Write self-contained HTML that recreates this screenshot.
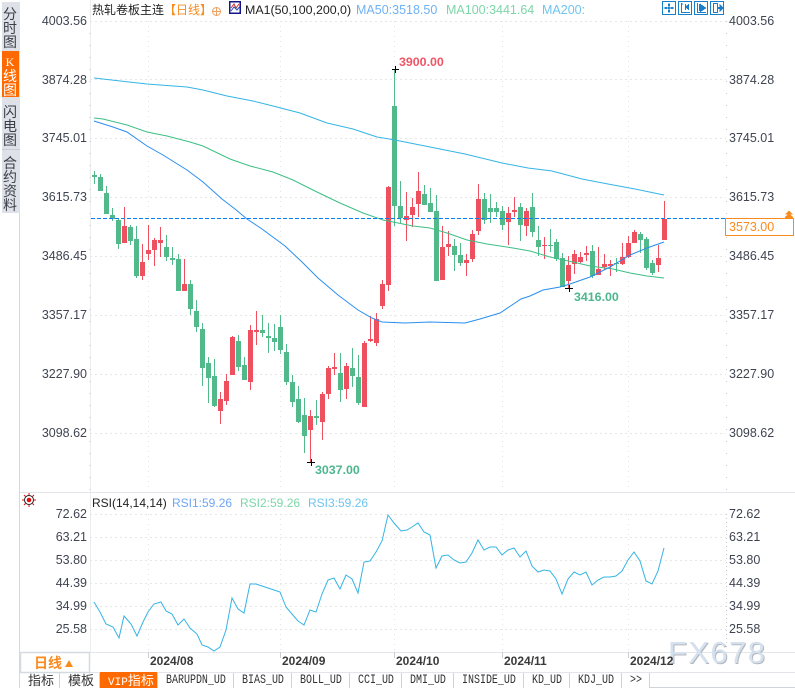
<!DOCTYPE html>
<html><head><meta charset="utf-8"><style>
html,body{margin:0;padding:0;background:#fff;width:795px;height:688px;overflow:hidden}
svg{display:block}
text{font-family:"Liberation Sans","Noto Sans CJK SC",sans-serif}
.p{font-size:12.5px;fill:#3f4450}
.cj{font-size:14px;fill:#3c4046;font-family:"Liberation Sans","WenQuanYi Zen Hei","Noto Sans CJK SC",sans-serif}
.t{font-family:"Liberation Mono","Noto Sans CJK SC",monospace;font-size:10px;fill:#333;transform-box:fill-box;transform-origin:50% 100%;transform:scaleY(1.25)}
.tc{font-size:13px;fill:#333;font-family:"Liberation Sans","WenQuanYi Zen Hei",sans-serif}
.d{font-size:12px;font-weight:bold;fill:#3a3a3a}
</style></head><body>
<svg width="795" height="688" viewBox="0 0 795 688" xmlns="http://www.w3.org/2000/svg">
<!-- side tabs -->
<rect x="2" y="2" width="18" height="211" fill="#dfe1e8"/>
<rect x="2" y="51" width="17" height="46" fill="#ff6a00"/>
<path d="M2 149.5H20" stroke="#c9ccd4"/>
<path d="M19.5 213V688" stroke="#d5d8de"/>
<g class="cj" text-anchor="middle">
<text class="cj" x="10" y="19">分</text><text class="cj" x="10" y="33">时</text><text class="cj" x="10" y="47">图</text>
<text x="10" y="66" style="font-family:'Liberation Serif',serif;font-size:12px;fill:#fff">K</text><text class="cj" x="10" y="81" style="fill:#fff">线</text><text class="cj" x="10" y="95" style="fill:#fff">图</text>
<text class="cj" x="10" y="117">闪</text><text class="cj" x="10" y="131">电</text><text class="cj" x="10" y="145">图</text>
<text class="cj" x="10" y="168">合</text><text class="cj" x="10" y="182">约</text><text class="cj" x="10" y="196">资</text><text class="cj" x="10" y="210">料</text>
</g>
<!-- axes -->
<path d="M90.5 0V652" stroke="#ececec"/>
<path d="M90 33V490M726.5 21V490" stroke="#c8c8c8" stroke-dasharray="1 11"/>
<path d="M726.5 514V650" stroke="#c8c8c8" stroke-dasharray="1 3"/>
<path d="M90 21.5H726M90 79.5H726M90 138.5H726M90 197.5H726M90 256.5H726M90 315.5H726M90 374.5H726M90 433.5H726" stroke="#e6e6e6" stroke-dasharray="2 3"/>
<path d="M90 514.5H726M90 537.5H726M90 560.5H726M90 583.5H726M90 606.5H726M90 629.5H726" stroke="#e6e6e6" stroke-dasharray="2 3"/>
<path d="M148.5 21V490M280.5 21V490M394.5 21V490M502.5 21V490M628.5 21V490M148.5 514V650M280.5 514V650M394.5 514V650M502.5 514V650M628.5 514V650" stroke="#e4e4e4" stroke-dasharray="1 4"/>
<path d="M20 492.5H795M90 652.5H795M20 672.5H795" stroke="#e3e5ea"/>
<path d="M148.5 652V658M280.5 652V658M394.5 652V658M502.5 652V658M628.5 652V658" stroke="#ccc"/>
<!-- candles green -->
<g shape-rendering="crispEdges" fill="none" stroke="#52b98a">
<path stroke-width="1" d="M94.5 171V184M100.5 174V191M106.5 186V214M112.5 208V221M118.5 219V249M130.5 225V245M136.5 226V278M166.5 235V261M172.5 247V265M178.5 254V291M190.5 280V315M196.5 300V332M202.5 323V386M208.5 357V403M214.5 359V407M238.5 335V371M244.5 357V380M262.5 315V337M268.5 323V353M274.5 324V351M280.5 315V354M286.5 344V385M292.5 375V407M298.5 386V423M304.5 398V453M316.5 400V425M340.5 353V402M352.5 348V387M358.5 355V405M394.5 69V226M400.5 181V223M424.5 185V205M430.5 188V212M436.5 195V281M454.5 239V271M460.5 243V266M484.5 193V224M490.5 194V223M496.5 202V217M502.5 206V230M520.5 203V241M532.5 193V237M538.5 226V256M550.5 229V252M556.5 239V261M562.5 253V287M592.5 245V278M616.5 258V272M640.5 232V253M646.5 237V270M652.5 260V275"/>
<path stroke-width="5" d="M94.5 175V177M100.5 177V191M106.5 193V214M112.5 215V219M118.5 220V244M130.5 227V241M136.5 239V276M166.5 247V257M172.5 258V260M178.5 259V291M190.5 284V309M196.5 311V327M202.5 329V368M208.5 363V378M214.5 376V406M238.5 341V367M244.5 365V380M262.5 330V333M268.5 336V338M274.5 338V342M280.5 327V350M286.5 352V382M292.5 382V402M298.5 399V422M304.5 415V436M316.5 416V418M340.5 373V390M352.5 368V376M358.5 377V403M394.5 106V206M400.5 206V218M424.5 194V205M430.5 203V212M436.5 211V281M454.5 246V255M460.5 255V263M484.5 199V220M490.5 208V212M496.5 208V212M502.5 211V225M520.5 207V225M532.5 207V232M538.5 240V247M550.5 245V246M556.5 242V259M562.5 258V287M592.5 251V276M616.5 263V264M640.5 234V240M646.5 239V268M652.5 263V273"/>
</g>
<!-- candles red -->
<g shape-rendering="crispEdges" fill="none" stroke="#ee5060">
<path stroke-width="1" d="M124.5 207V243M142.5 244V280M148.5 225V260M154.5 238V266M160.5 227V257M184.5 259V291M220.5 392V424M226.5 374V405M232.5 336V375M250.5 325V390M256.5 311V345M310.5 410V462M322.5 392V440M328.5 366V399M334.5 353V375M346.5 363V399M364.5 341V407M370.5 316V342M376.5 313V346M382.5 280V309M388.5 186V291M406.5 192V241M412.5 198V227M418.5 172V217M442.5 226V280M448.5 231V256M466.5 254V276M472.5 230V262M478.5 184V235M508.5 207V245M514.5 197V217M526.5 208V236M544.5 237V259M568.5 256V288M574.5 250V274M580.5 252V263M586.5 246V261M598.5 247V275M604.5 254V270M610.5 260V276M622.5 243V265M628.5 236V258M634.5 230V243M658.5 245V272M664.5 201V240"/>
<path stroke-width="5" d="M124.5 226V243M142.5 262V276M148.5 250V254M154.5 240V250M160.5 240V243M184.5 284V291M220.5 399V411M226.5 381V401M232.5 337V375M250.5 330V382M256.5 330V332M310.5 416V430M322.5 394V422M328.5 368V394M334.5 367V369M346.5 366V389M364.5 343V407M370.5 339V341M376.5 319V343M382.5 284V306M388.5 187V285M406.5 216V220M412.5 207V215M418.5 191V204M442.5 247V280M448.5 244V247M466.5 260V263M472.5 234V259M478.5 199V231M508.5 213V222M514.5 210V212M526.5 211V226M544.5 245V246M568.5 265V281M574.5 254V264M580.5 257V262M586.5 253V255M598.5 269V275M604.5 264V267M610.5 264V266M622.5 257V264M628.5 243V257M634.5 232V243M658.5 258V265M664.5 219V240"/>
</g>
<!-- MA lines -->
<g fill="none" stroke-width="1">
<polyline stroke="#35b4e6" points="94,78 147,84 187,87 203,90 227,96 253,101 277,107 300,113 327,123 353,129 377,137 395,140 415,144 445,150 465,154 502,163 528,168 552,171 582,179 608,184 635,189 664,195"/>
<polyline stroke="#3dbf85" points="94,118 103,119 127,125 147,132 167,136 190,142 203,146 230,159 250,166 273,172 293,180 317,192 340,203 363,213 383,220 393,222 413,226 430,228 447,233 467,240 487,244 513,248 530,251 550,257 573,262 590,266 613,269 630,273 647,276 664,278"/>
<polyline stroke="#2a8ef0" points="94,121 113,127 127,132 147,146 163,155 187,170 203,182 222,199 235,209 247,219 262,229 285,246 302,262 318,278 338,295 358,310 372,318 382,322 405,323 430,322 465,323 480,319 500,313 521,299 530,296 543,290 560,287 570,284 590,277 610,267 630,255 647,248 664,242"/>
</g>
<path d="M91 218.5H726" stroke="#0a7ff5" stroke-dasharray="4 2" shape-rendering="crispEdges"/>
<!-- markers -->
<path d="M392 69.5H399M395.5 66V73M565 288.5H573M569.5 285V292M307 462.5H315M311.5 459V466" stroke="#000" fill="none" shape-rendering="crispEdges"/>
<text x="399" y="66" style="font-size:12.4px;font-weight:bold;fill:#ef5565">3900.00</text>
<text x="315" y="474" style="font-size:12.4px;font-weight:bold;fill:#4cb68e">3037.00</text>
<text x="574" y="301" style="font-size:12.4px;font-weight:bold;fill:#4cb68e">3416.00</text>
<!-- price labels -->
<g class="p" text-anchor="end">
<text class="p" x="87" y="25">4003.56</text><text class="p" x="87" y="84">3874.28</text><text class="p" x="87" y="142">3745.01</text><text class="p" x="87" y="201">3615.73</text><text class="p" x="87" y="260">3486.45</text><text class="p" x="87" y="319">3357.17</text><text class="p" x="87" y="378">3227.90</text><text class="p" x="87" y="437">3098.62</text>
<text class="p" x="87" y="518">72.62</text><text class="p" x="87" y="541">63.21</text><text class="p" x="87" y="564">53.80</text><text class="p" x="87" y="587">44.39</text><text class="p" x="87" y="610">34.99</text><text class="p" x="87" y="633">25.58</text>
</g>
<g class="p">
<text class="p" x="729" y="25">4003.56</text><text class="p" x="729" y="84">3874.28</text><text class="p" x="729" y="142">3745.01</text><text class="p" x="729" y="201">3615.73</text><text class="p" x="729" y="260">3486.45</text><text class="p" x="729" y="319">3357.17</text><text class="p" x="729" y="378">3227.90</text><text class="p" x="729" y="437">3098.62</text>
<text class="p" x="729" y="518">72.62</text><text class="p" x="729" y="541">63.21</text><text class="p" x="729" y="564">53.80</text><text class="p" x="729" y="587">44.39</text><text class="p" x="729" y="610">34.99</text><text class="p" x="729" y="633">25.58</text>
</g>
<!-- current price -->
<rect x="725.5" y="218.5" width="68" height="17" fill="#fff" stroke="#f98a1c"/>
<text x="729" y="231" style="font-size:12.5px;fill:#f98a1c">3573.00</text>
<path d="M789 210.5L793 214.5H785ZM789 213.5L793 217H785ZM785 217H793V218.5H785Z" fill="#f98a1c"/>
<!-- header -->
<text x="92" y="14" style="font-size:12px;fill:#222">热轧卷板主连</text>
<text x="164" y="14" style="font-size:12px;fill:#f98a1c">【日线】</text>
<circle cx="216.5" cy="11.5" r="4" fill="none" stroke="#f0a060"/><path d="M212 11.5H221M216.5 7V16" stroke="#f0a060"/>
<rect x="229.75" y="1.75" width="10.5" height="11.5" fill="#fff" stroke="#14148c" stroke-width="1.5"/>
<path d="M231 8L234 4L236 8L239 4" fill="none" stroke="#d03030"/><path d="M231 11L234 7L237 10L239.5 7" fill="none" stroke="#2050b0"/>
<text x="245" y="14" style="font-size:12.4px;fill:#222">MA1(50,100,200,0)</text>
<text x="356" y="14" style="font-size:12.5px;fill:#6fb1f5">MA50:3518.50</text>
<text x="446" y="14" style="font-size:12.5px;fill:#7dd6a8">MA100:3441.64</text>
<text x="542" y="14" style="font-size:12.5px;fill:#6ec5ee">MA200:</text>
<!-- top right icons -->
<g fill="none" stroke="#1a7fc9" shape-rendering="crispEdges">
<rect x="662.5" y="1.5" width="13" height="13"/><rect x="678.5" y="1.5" width="13" height="13"/><rect x="694.5" y="1.5" width="13" height="13"/><rect x="710.5" y="1.5" width="13" height="13"/>
<path d="M669 3.5V6.5M669 9.5V12.5M664.5 8H667.5M670.5 8H673.5M668 8H670" stroke-width="2"/>
<path d="M681.5 3V12.5H690M681.5 4H683M685.5 4V10M688.5 4V10"/>
<path d="M697.5 3V12.5H706M699.5 4V11"/>
<path d="M700.5 4.5L705.5 8L700.5 11.5Z" fill="#1a7fc9"/>
<path d="M685.5 7L688.5 5V9Z" fill="#1a7fc9"/>
<path d="M713.5 3.5H717.5V12.5H713.5Z"/>
<path d="M718 8H720" stroke-width="2"/><path d="M720 5L723 8L720 11Z" fill="#1a7fc9"/>
</g>
<!-- RSI -->
<circle cx="29" cy="500" r="4.5" fill="none" stroke="#222"/><circle cx="29" cy="500" r="2.3" fill="#e01010"/>
<path d="M29 493V495M29 505V507M22 500H24M34 500H36M24 495L25.5 496.5M34 495L32.5 496.5M24 505L25.5 503.5M34 505L32.5 503.5" stroke="#e01010"/>
<text x="92" y="507" style="font-size:12px;fill:#222">RSI(14,14,14)</text>
<text x="172" y="507" style="font-size:12px;fill:#6fa5f5">RSI1:59.26</text>
<text x="240" y="507" style="font-size:12px;fill:#7dd6a8">RSI2:59.26</text>
<text x="308" y="507" style="font-size:12px;fill:#6ec5ee">RSI3:59.26</text>
<polyline fill="none" stroke="#35b4e6" stroke-width="1" points="94,602 100,612 106,624 113,627 119,638 124,616 131,624 137,636 143,622 148,612 154,604 161,602 166,611 172,614 178,625 184,619 190,628 197,634 202,645 208,647 214,651 220,647 226,630 232,598 238,609 244,613 250,584 256,584 262,586 268,588 274,590 280,592 286,607 292,614 298,621 304,625 310,610 316,612 322,594 328,580 334,578 340,589 346,575 352,579 358,593 364,562 370,561 376,552 382,541 388,515 394,523 401,531 407,530 412,527 418,523 424,532 430,535 436,568 442,556 448,555 454,560 460,563 466,562 472,553 478,540 484,550 490,547 496,547 502,555 508,550 514,548 520,557 526,551 532,566 538,572 544,570 550,571 556,579 562,594 568,579 574,572 580,575 586,572 592,585 598,580 604,577 610,577 616,576 622,571 628,560 634,552 640,561 646,581 652,584 658,571 664,548"/>
<!-- watermark -->
<text x="669" y="664" style="font-size:31px;letter-spacing:1.4px;fill:#b4b8be">FX678</text>
<text x="668" y="663" style="font-size:31px;letter-spacing:1.4px;fill:#d6e1ef">FX678</text>
<!-- dates -->
<text class="d" x="150" y="665">2024/08</text><text class="d" x="282" y="665">2024/09</text><text class="d" x="396" y="665">2024/10</text><text class="d" x="504" y="665">2024/11</text><text class="d" x="630" y="665">2024/12</text>
<!-- bottom left box -->
<rect x="20.5" y="652.5" width="69" height="20" fill="#fff" stroke="#d5dae0" stroke-width="1.5"/>
<text x="34" y="668" style="font-size:14px;fill:#f98a1c;font-weight:bold">日线</text>
<path d="M65 667L69 660L73 667Z" fill="#f98a1c"/>
<!-- tabs -->
<path d="M59.5 673V688M99.5 673V688M157.5 673V688M233.5 673V688M291.5 673V688M349.5 673V688M401.5 673V688M453.5 673V688M523.5 673V688M569.5 673V688M621.5 673V688M649.5 673V688M650 687.5H795" stroke="#cfd3da"/>
<rect x="100" y="672" width="57" height="16" fill="#ff6a00"/>
<text class="tc" x="28" y="685">指标</text><text class="tc" x="68" y="685">模板</text>
<text x="108" y="685" style="font-size:11px;fill:#fff;font-family:'Liberation Mono','WenQuanYi Zen Hei',monospace">VIP<tspan style="font-size:13px">指标</tspan></text>
<text class="t" x="166" y="684">BARUPDN_UD</text><text class="t" x="242" y="684">BIAS_UD</text><text class="t" x="300" y="684">BOLL_UD</text><text class="t" x="358" y="684">CCI_UD</text><text class="t" x="410" y="684">DMI_UD</text><text class="t" x="462" y="684">INSIDE_UD</text><text class="t" x="532" y="684">KD_UD</text><text class="t" x="578" y="684">KDJ_UD</text><text class="t" x="630" y="684">&gt;&gt;</text>
</svg>
</body></html>
